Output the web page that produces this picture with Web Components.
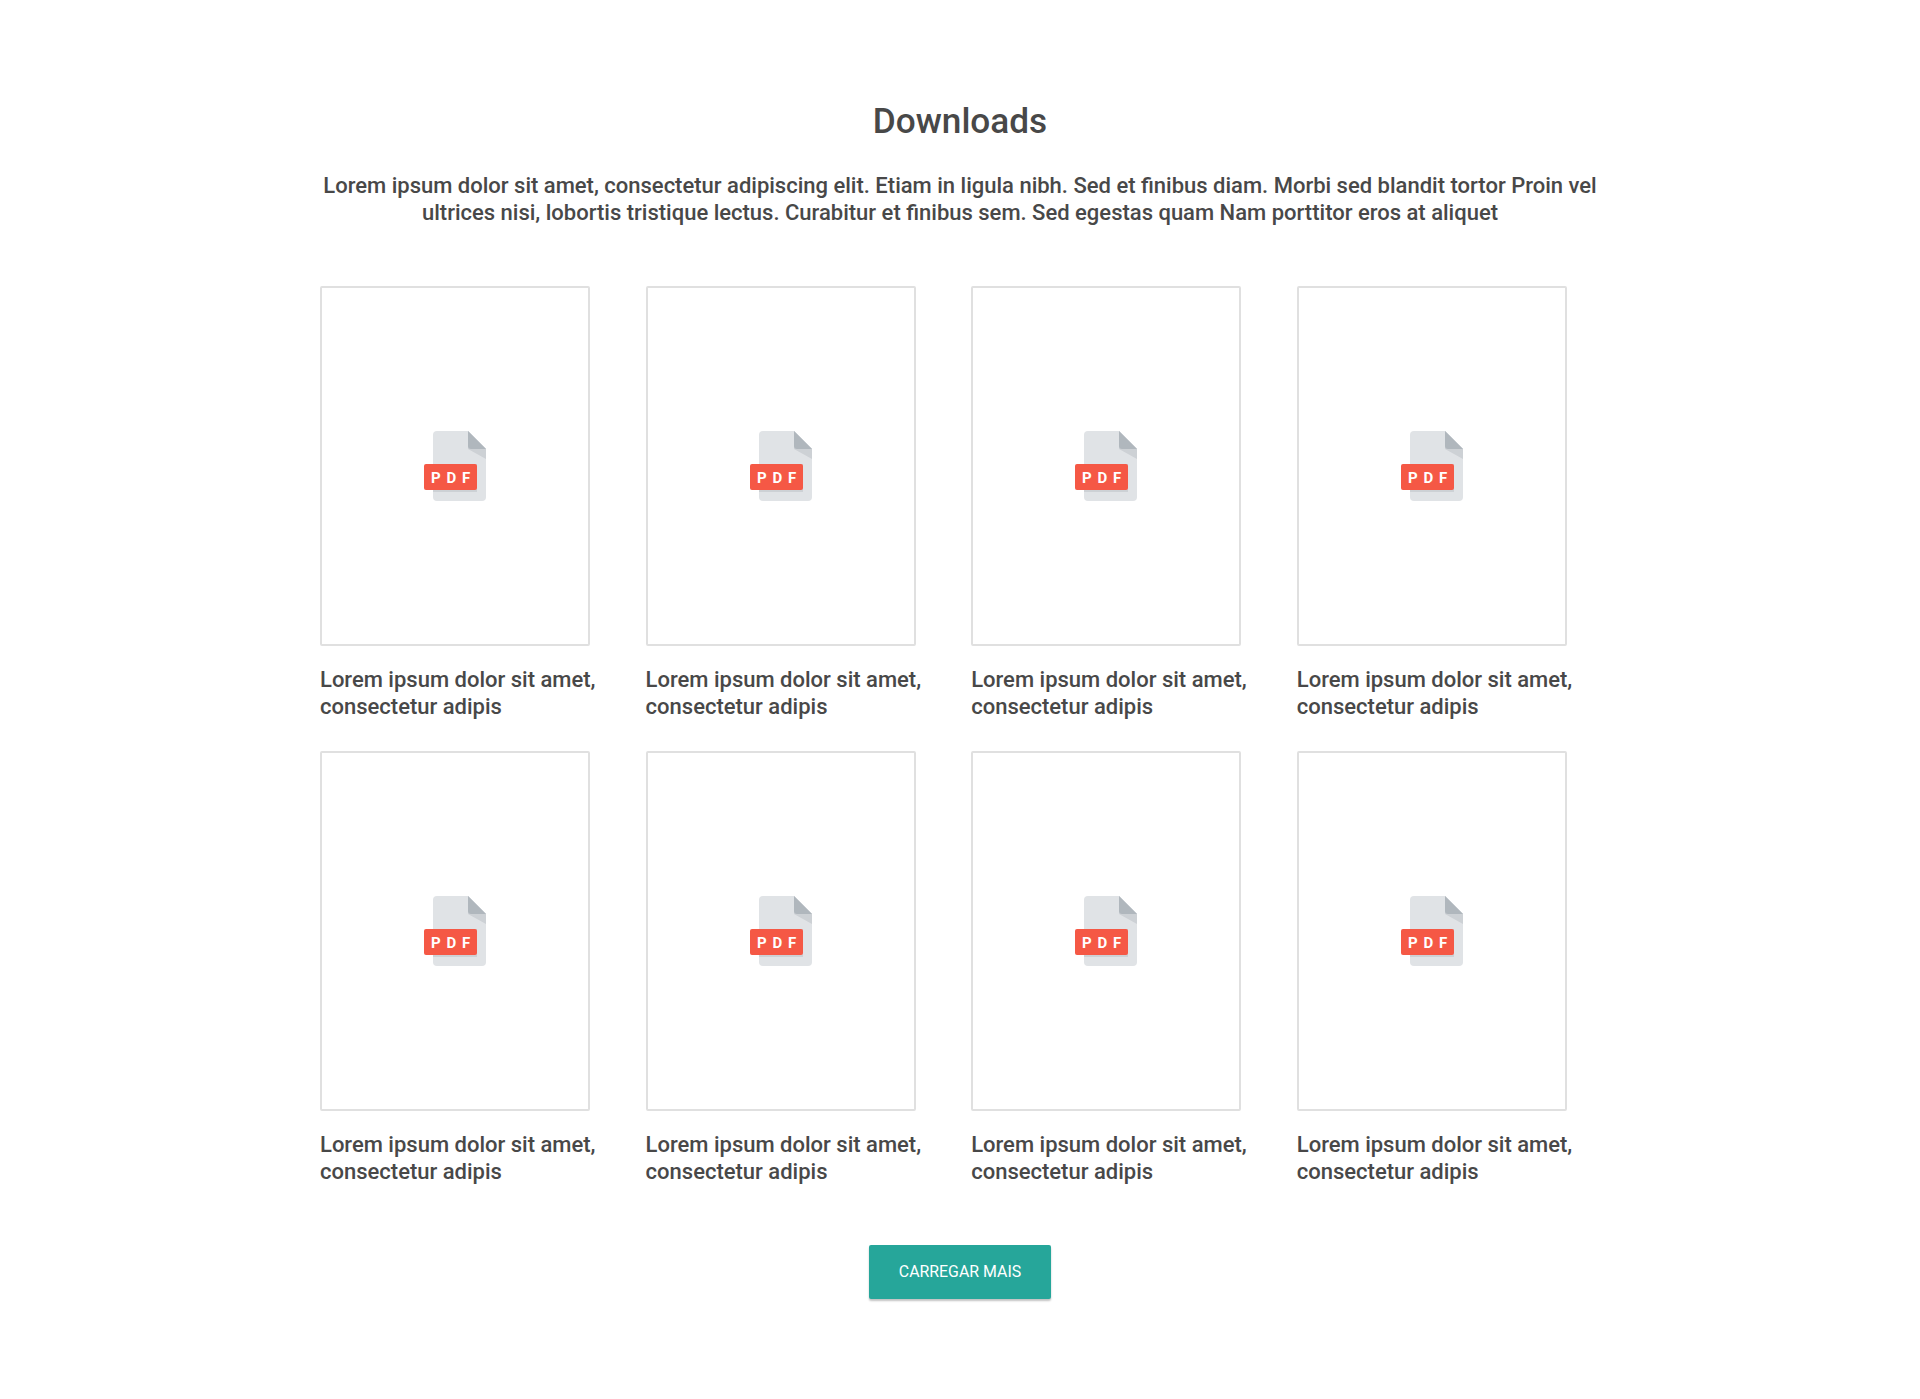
<!DOCTYPE html>
<html>
<head>
<meta charset="utf-8">
<title>Downloads</title>
<style>
    body { margin: 0; background: #fff; font-family: Roboto, sans-serif; color: #424242; }
</style>
</head>
<body>
<downloads-section heading="Downloads">
    <span slot="intro">Lorem ipsum dolor sit amet, consectetur adipiscing elit. Etiam in ligula nibh. Sed et finibus diam. Morbi sed blandit tortor Proin vel ultrices nisi, lobortis tristique lectus. Curabitur et finibus sem. Sed egestas quam Nam porttitor eros at aliquet</span>
    <download-card>Lorem ipsum dolor sit amet, consectetur adipis</download-card>
    <download-card>Lorem ipsum dolor sit amet, consectetur adipis</download-card>
    <download-card>Lorem ipsum dolor sit amet, consectetur adipis</download-card>
    <download-card>Lorem ipsum dolor sit amet, consectetur adipis</download-card>
    <download-card>Lorem ipsum dolor sit amet, consectetur adipis</download-card>
    <download-card>Lorem ipsum dolor sit amet, consectetur adipis</download-card>
    <download-card>Lorem ipsum dolor sit amet, consectetur adipis</download-card>
    <download-card>Lorem ipsum dolor sit amet, consectetur adipis</download-card>
    <load-more slot="action">CARREGAR MAIS</load-more>
</downloads-section>

<script>
// Section wrapper: heading, intro, grid of cards, action
class DownloadsSection extends HTMLElement {
    constructor() {
        super();
        const shadow = this.attachShadow({ mode: 'open' });
        const heading = this.getAttribute('heading') || '';
        shadow.innerHTML = `
            <style>
                :host {
                    display: block;
                    padding: 100px 320px 0;
                    height: 1299px;
                }
                h2 {
                    margin: 0 0 30px;
                    font-size: 35.2px;
                    line-height: 42px;
                    font-weight: 500;
                    text-align: center;
                    color: #484848;
                }
                .intro {
                    margin: 0 0 60px;
                    font-size: 22px;
                    line-height: 27px;
                    font-weight: 500;
                    text-align: center;
                    color: #484848;
                }
                .grid {
                    display: grid;
                    grid-template-columns: repeat(4, 325.6px);
                    row-gap: 31px;
                    margin-bottom: 60px;
                }
                .action {
                    display: flex;
                    justify-content: center;
                }
            </style>
            <h2>${heading}</h2>
            <p class="intro"><slot name="intro"></slot></p>
            <div class="grid"><slot></slot></div>
            <div class="action"><slot name="action"></slot></div>
        `;
    }
}

// One PDF download: thumbnail box and caption
class DownloadCard extends HTMLElement {
    constructor() {
        super();
        const shadow = this.attachShadow({ mode: 'open' });
        shadow.innerHTML = `
            <style>
                :host {
                    display: block;
                    padding-right: 26px;
                }
                .thumb {
                    box-sizing: border-box;
                    width: 270px;
                    height: 360px;
                    border: 2px solid #e0e0e0;
                    border-radius: 2px;
                    display: flex;
                    align-items: center;
                    justify-content: center;
                }
                .caption {
                    margin-top: 20px;
                    font-size: 22px;
                    line-height: 27px;
                    font-weight: 500;
                    color: #484848;
                }
                svg { display: block; }
                .pdf-label {
                    font-family: Roboto, sans-serif;
                    font-size: 15px;
                    font-weight: 700;
                    letter-spacing: 5.8px;
                    fill: #fff;
                }
            </style>
            <div class="thumb">
                <svg width="62" height="70" viewBox="0 0 62 70">
                    <path d="M13 0H44L62 18V66a4 4 0 0 1-4 4H13a4 4 0 0 1-4-4V4a4 4 0 0 1 4-4Z" fill="#e0e3e6"/>
                    <path d="M44 0L62 18V28L44 18Z" fill="#cdd1d5"/>
                    <path d="M44 0L62 18H47a3 3 0 0 1-3-3Z" fill="#b0b7bd"/>
                    <rect x="9" y="33" width="44" height="28" fill="#cdd1d5"/>
                    <rect x="0" y="33" width="53" height="26" rx="2" fill="#f55845"/>
                    <text class="pdf-label" x="7" y="51.5">PDF</text>
                </svg>
            </div>
            <div class="caption"><slot></slot></div>
        `;
    }
}

class LoadMore extends HTMLElement {
    constructor() {
        super();
        const shadow = this.attachShadow({ mode: 'open' });
        shadow.innerHTML = `
            <style>
                :host { display: block; }
                button {
                    width: 182px;
                    height: 54px;
                    padding: 0 0 1px;
                    border: 0;
                    border-radius: 2px;
                    background: #26a69a;
                    color: #fff;
                    font-family: Roboto, sans-serif;
                    font-size: 15.9px;
                    font-weight: 400;
                    box-shadow: 0 2px 2px rgba(0,0,0,.24);
                    cursor: pointer;
                }
            </style>
            <button><slot></slot></button>
        `;
    }
}

customElements.define('downloads-section', DownloadsSection);
customElements.define('download-card', DownloadCard);
customElements.define('load-more', LoadMore);
</script>
</body>
</html>
